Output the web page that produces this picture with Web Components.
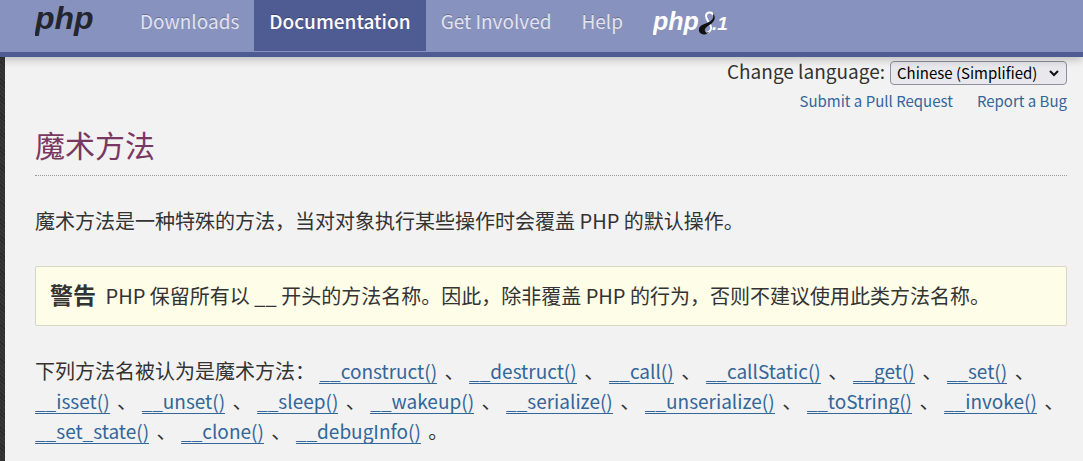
<!DOCTYPE html>
<html lang="zh-CN">
<head>
<meta charset="utf-8">
<meta name="viewport" content="width=device-width, initial-scale=1">
<title>PHP: 魔术方法 - Manual</title>
<style>
    body {
        margin: 0;
        min-height: 100vh;
        display: flex;
        flex-direction: column;
        color: #333333;
        background: repeating-linear-gradient(45deg, #2b2b2b 0 1px, #363636 1px 3px);
        font-family: "Noto Sans CJK SC", "Noto Sans", sans-serif;
        font-size: 20px;
        line-height: 30px;
    }
</style>
</head>
<body>
<php-navbar>
    <php-nav-item href="#downloads">Downloads</php-nav-item>
    <php-nav-item href="#docs" active>Documentation</php-nav-item>
    <php-nav-item href="#get-involved">Get Involved</php-nav-item>
    <php-nav-item href="#help">Help</php-nav-item>
</php-navbar>
<php-page>
    <php-page-tools slot="tools"></php-page-tools>
    <span slot="title">魔术方法</span>
    <php-para>魔术方法是一种特殊的方法，当对对象执行某些操作时会覆盖 PHP 的默认操作。</php-para>
    <php-warning label="警告">PHP 保留所有以 __ 开头的方法名称。因此，除非覆盖 PHP 的行为，否则不建议使用此类方法名称。</php-warning>
    <php-method-list names="construct destruct call callStatic get set isset unset sleep wakeup serialize unserialize toString invoke set_state clone debugInfo">下列方法名被认为是魔术方法：</php-method-list>
</php-page>

<script>
const navbarContent = `
<style>
    :host {
        display: block;
        position: relative;
        background: #8892bf;
        border-bottom: 5px solid #4f5b93;
        box-shadow: 0 3px 8px rgba(0, 0, 0, .22);
    }

    nav {
        display: flex;
        align-items: stretch;
        height: 52px;
        padding-left: 35px;
    }

    a {
        display: flex;
    }

    .logo {
        width: 90px;
    }

    .release {
        padding-left: 15px;
    }

    svg {
        display: block;
    }

    text {
        font-family: "Liberation Sans", sans-serif;
        font-style: italic;
        font-weight: 700;
    }
</style>
<nav>
    <a class="logo" href="#home" aria-label="php">
        <svg width="64" height="42">
            <text x="0" y="29" font-size="32" fill="#23252f">php</text>
        </svg>
    </a>
    <slot></slot>
    <a class="release" href="#php81" aria-label="php 8.1">
        <svg width="80" height="42">
            <text x="0" y="30" font-size="25" fill="#ffffff">php</text>
            <path d="M60 15 C59 11 53 12 53 16 C53 21 59 24 58 29 C57 32 54 33 52 33" fill="none" stroke="#ffffff" stroke-width="2"/>
            <path d="M60 13 C63 17 62 21 58 24 C55 26 51 28 52 31 C53 33 55 33 57 31 C54 36 47 35 46 31 C45 25 52 24 56 22 C60 20 61 17 60 13z" fill="#111111"/>
            <text x="59" y="30" font-size="19" fill="#ffffff">.1</text>
        </svg>
    </a>
</nav>
`;

const navItemContent = `
<style>
    :host {
        display: block;
    }

    a {
        display: block;
        height: 51px;
        padding: 0 15px;
        box-sizing: border-box;
        font-size: 19px;
        line-height: 42px;
        color: #e2e4ef;
        text-decoration: none;
        text-shadow: 0 -1px 0 rgba(0, 0, 0, .25);
    }

    :host([active]) a {
        color: #ffffff;
        font-weight: 500;
        background: #4f5b93;
    }
</style>
<a><slot></slot></a>
`;

const pageContent = `
<style>
    :host {
        display: block;
        flex: 1;
        margin-left: 5px;
        padding: 0 16px 15px 30px;
        background: #f2f2f2;
    }

    h1 {
        margin: 0 0 30px;
        padding: 9px 0;
        border-bottom: 1px dotted #999999;
        color: #793862;
        font-size: 30px;
        font-weight: 400;
        line-height: 44px;
    }

    .content {
        display: flex;
        flex-direction: column;
        gap: 30px;
    }
</style>
<slot name="tools"></slot>
<h1><slot name="title"></slot></h1>
<div class="content"><slot></slot></div>
`;

const toolsContent = `
<style>
    :host {
        display: flex;
        flex-direction: column;
        align-items: flex-end;
    }

    .language {
        display: flex;
        align-items: baseline;
        gap: 5px;
        height: 32px;
    }

    label {
        font-size: 19px;
        line-height: 28px;
    }

    .picker {
        display: grid;
        align-items: center;
    }

    select,
    svg {
        grid-area: 1 / 1;
    }

    select {
        appearance: none;
        height: 24px;
        padding: 0 28px 0 6px;
        border: 1px solid #8f8f9d;
        border-radius: 4px;
        background: #e9e9ed;
        color: #000000;
        font-family: inherit;
        font-size: 15px;
        line-height: 22px;
    }

    svg {
        justify-self: end;
        margin-right: 8px;
        pointer-events: none;
    }

    .links {
        display: flex;
        gap: 24px;
        font-size: 15px;
        line-height: 24px;
    }

    a {
        color: #336699;
        text-decoration: none;
    }
</style>
<div class="language">
    <label for="lang">Change language:</label>
    <span class="picker">
        <select id="lang">
            <option>Chinese (Simplified)</option>
            <option>English</option>
        </select>
        <svg width="10" height="8">
            <path d="M1 2 L5 6 L9 2" fill="none" stroke="#111111" stroke-width="2"/>
        </svg>
    </span>
</div>
<div class="links">
    <a href="#pull">Submit a Pull Request</a>
    <a href="#bug">Report a Bug</a>
</div>
`;

const paraContent = `
<style>
    :host {
        display: block;
    }

    p {
        margin: 0;
    }
</style>
<p><slot></slot></p>
`;

const warningContent = `
<style>
    :host {
        display: block;
        padding: 14px;
        border: 1px solid #d6d6c2;
        border-radius: 2px;
        background: #fdfde8;
    }

    strong {
        margin-right: 5px;
        font-size: 23px;
        line-height: 24px;
    }
</style>
<strong></strong>
<slot></slot>
`;

const methodListContent = `
<style>
    :host {
        display: block;
    }

    a {
        display: inline-block;
        margin-right: 3px;
        color: #336699;
        font-size: 19px;
        line-height: 24px;
        text-decoration: none;
        border-bottom: 1px solid #336699;
    }
</style>
<slot></slot>
<span id="methods"></span>
`;

function define(name, content, setup) {
    window.customElements.define(name, class extends HTMLElement {
        constructor() {
            super();
            this.attachShadow({mode: 'open'});
            this.template = document.createElement('template');
            this.template.innerHTML = content;
        }
        connectedCallback() {
            if (this.shadowRoot.hasChildNodes()) return;
            var clone = document.importNode(this.template.content, true);
            if (setup) setup(this, clone);
            this.shadowRoot.appendChild(clone);
        }
    });
}

define('php-navbar', navbarContent);
define('php-nav-item', navItemContent, (host, root) => {
    root.querySelector('a').href = host.getAttribute('href');
});
define('php-page', pageContent);
define('php-page-tools', toolsContent);
define('php-para', paraContent);
define('php-warning', warningContent, (host, root) => {
    root.querySelector('strong').textContent = host.getAttribute('label');
});
define('php-method-list', methodListContent, (host, root) => {
    var names = host.getAttribute('names').split(' ');
    var links = names.map(name => `<a href="#${name}">__${name}()</a>`);
    root.querySelector('#methods').innerHTML = links.join(' 、 ') + ' 。';
});
</script>
</body>
</html>
